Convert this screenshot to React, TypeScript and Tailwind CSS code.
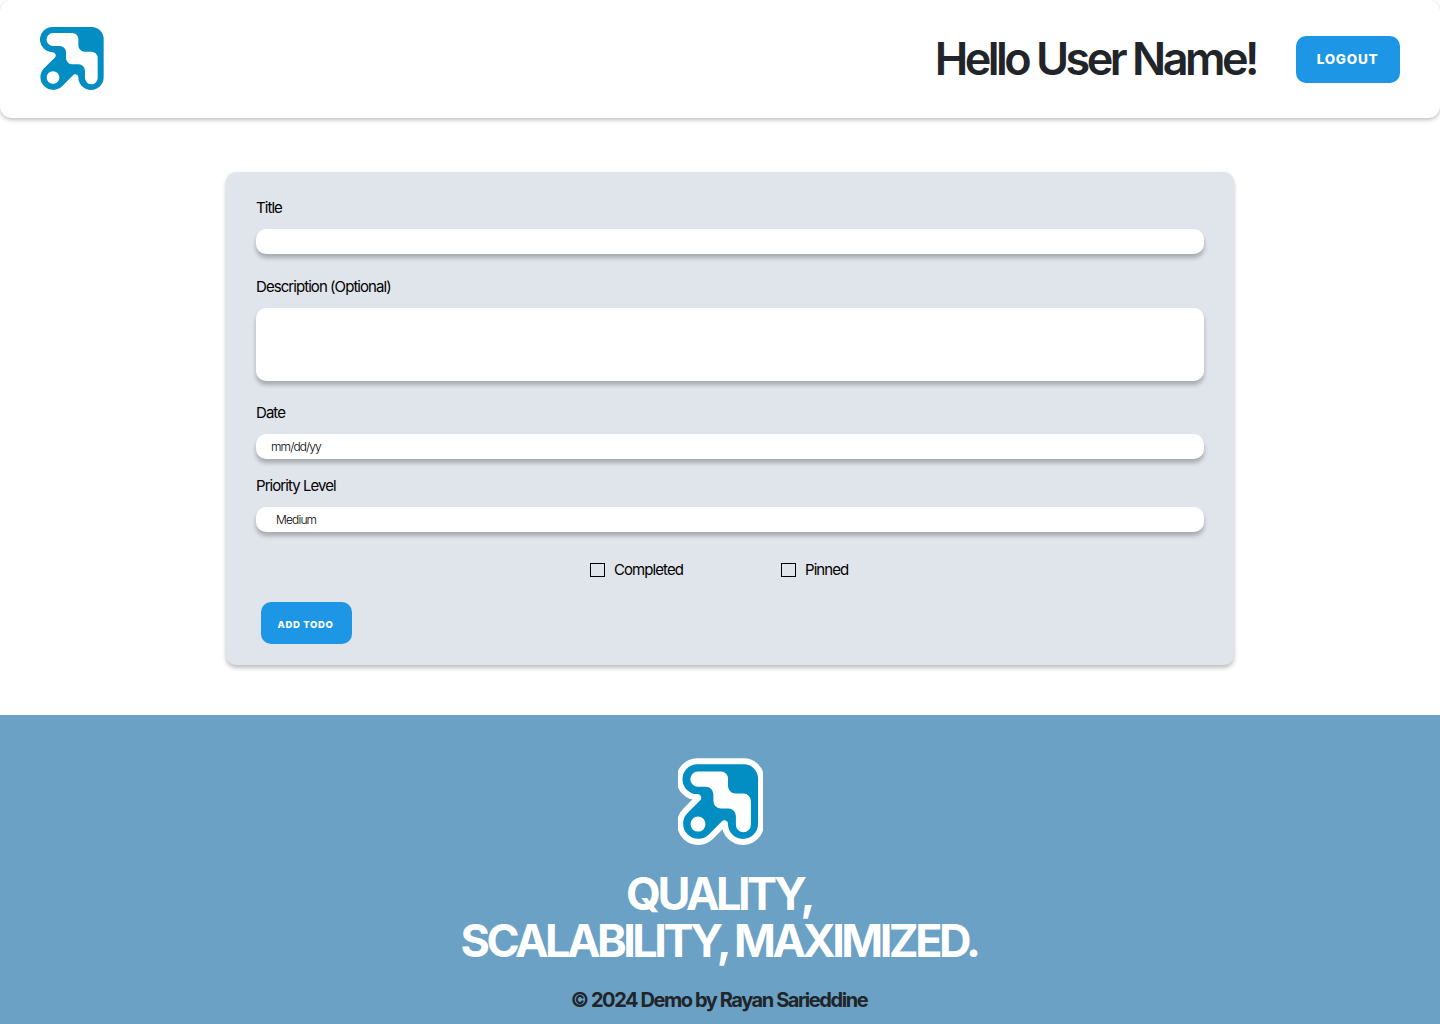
import type { ReactNode } from "react";

const BODY =
  "M67 36H185A36 36 0 0 1 221 72V187A38 38 0 0 1 145 187A9 9 0 0 0 129 181L97 213A38 38 0 1 1 42 160L74 128A9.5 9.5 0 0 0 68 111.500A37.700 37.700 0 0 1 67 36Z";
const STEP =
  "M69 54H127A18 18 0 0 1 145 72V91A19 19 0 0 0 164 110H184A19 19 0 0 1 203 129V189A19 19 0 0 1 165 189V167A19 19 0 0 0 146 148H127A19 19 0 0 1 108 129V112A19 19 0 0 0 89 93H69A19.500 19.500 0 0 1 69 54Z";

function LogoShapes() {
  return (
    <>
      <path d={BODY} fill="#028dc3" />
      <path d={STEP} fill="#fff" />
      <circle cx="69" cy="187.500" r="19" fill="#fff" />
    </>
  );
}

const fieldBox = "block w-full rounded-[10px] bg-white shadow-[0_4px_4px_rgba(0,0,0,0.25)]";

function Field({ label, className, children }: { label: string; className: string; children: ReactNode }) {
  return (
    <div className={className}>
      <p className="mb-[11px] h-5 text-[15px] leading-5 tracking-[-0.94px]">{label}</p>
      {children}
    </div>
  );
}

function Check({ label, className }: { label: string; className: string }) {
  return (
    <label className={`flex items-center ${className}`}>
      <span className="h-[14px] w-[15px] border border-black" />
      <span className="ml-[9px] text-[15px] leading-5 tracking-[-0.93px]">{label}</span>
    </label>
  );
}

export default function App() {
  return (
    <div className="flex h-[1024px] w-[1440px] flex-col overflow-hidden bg-white font-[Inter,sans-serif] text-black">
      <header className="flex h-[118px] shrink-0 items-center rounded-[12px] bg-white px-10 shadow-[0_2px_4px_rgba(0,0,0,0.25)]">
        <svg className="h-[64px] w-[64px]" viewBox="30 36 192 192">
          <LogoShapes />
        </svg>
        <h1 className="mr-[40px] ml-auto text-[45px] leading-[54px] font-semibold tracking-[-3.52px] whitespace-nowrap text-[#212529]">
          Hello User Name!
        </h1>
        <button className="h-[47px] w-[104px] rounded-[10px] bg-[#1c96e5] pr-[1px] text-[13.5px] font-extrabold tracking-[0.75px] text-white">
          LOGOUT
        </button>
      </header>

      <main className="mt-[54px] ml-[226px] h-[493px] w-[1008px] shrink-0 rounded-[10px] bg-[#e0e4eb] px-[30px] pt-[26px] shadow-[0_3px_4px_rgba(0,0,0,0.25)]">
        <Field label="Title" className="">
          <div className={`${fieldBox} h-[25px]`} />
        </Field>
        <Field label="Description (Optional)" className="mt-[23px]">
          <div className={`${fieldBox} h-[73px]`} />
        </Field>
        <Field label="Date" className="mt-[22px]">
          <div className={`${fieldBox} h-[25px] pl-[15px] text-[12px] leading-[25px] font-light tracking-[-0.9px]`}>
            mm/dd/yy
          </div>
        </Field>
        <Field label="Priority Level" className="mt-[17px]">
          <div className={`${fieldBox} h-[25px] pl-5 text-[12px] leading-[25px] font-light tracking-[-0.85px]`}>
            Medium
          </div>
        </Field>
        <div className="mt-7 flex pl-[334px]">
          <Check label="Completed" className="w-[191px]" />
          <Check label="Pinned" className="" />
        </div>
        <button className="mt-[22px] ml-[5px] h-[42px] w-[91px] rounded-[10px] bg-[#1c96e5] pt-[4px] pr-[2px] text-[9.5px] font-extrabold tracking-[0.65px] text-white">
          ADD TODO
        </button>
      </main>

      <footer className="mt-[50px] flex flex-1 flex-col items-center bg-[#6aa1c5] pt-[43px]">
        <svg className="h-[88px] w-[85px] shrink-0" viewBox="18.300 20 215.400 223">
          <path d={BODY} fill="#fff" stroke="#fff" strokeWidth="31" strokeLinejoin="round" />
          <LogoShapes />
        </svg>
        <p className="mt-[24px] mr-[2px] text-center text-[45px] leading-[47px] font-bold tracking-[-3.52px] whitespace-nowrap text-white">
          QUALITY,
          <br />
          SCALABILITY, MAXIMIZED.
        </p>
        <p className="mt-[22px] mr-[2px] text-[20px] leading-7 font-bold tracking-[-1.42px] whitespace-nowrap text-[#212529]">
          © 2024 Demo by Rayan Sarieddine
        </p>
      </footer>
    </div>
  );
}
